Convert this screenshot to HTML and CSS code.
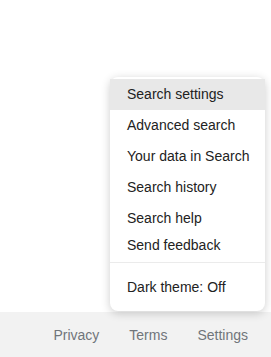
FILE: index.html
```html
<!DOCTYPE html>
<html>
<head>
<meta charset="utf-8">
<link rel="stylesheet" href="styles.css">
</head>
<body>
<div class="page">
  <div class="content"></div>
  <footer class="footer">
    <a class="flink">Privacy</a>
    <a class="flink">Terms</a>
    <a class="flink">Settings</a>
  </footer>
  <div class="menu">
    <div class="item active">Search settings</div>
    <div class="item">Advanced search</div>
    <div class="item">Your data in Search</div>
    <div class="item">Search history</div>
    <div class="item">Search help</div>
    <div class="item short">Send feedback</div>
    <div class="divider"></div>
    <div class="item last">Dark theme: Off</div>
  </div>
</div>
</body>
</html>
```

FILE: styles.css
```css
html, body {
  margin: 0;
  padding: 0;
  background: #fff;
  font-family: "Liberation Sans", Arial, sans-serif;
}
.page {
  position: relative;
  width: 271px;
  height: 357px;
  display: flex;
  flex-direction: column;
  overflow: hidden;
}
.content {
  flex: 1;
}
.footer {
  height: 45px;
  background: #f2f2f2;
  display: flex;
  justify-content: flex-end;
  align-items: center;
  gap: 30px;
  padding-right: 23px;
  font-size: 14px;
  color: #70757a;
}
.flink {
  color: #70757a;
  text-decoration: none;
}
.menu {
  position: absolute;
  left: 110px;
  top: 77px;
  width: 155px;
  background: #fff;
  border-radius: 8px;
  box-shadow: 0 2px 10px rgba(0, 0, 0, 0.2);
  padding: 2px 0 8px;
  font-size: 14px;
  color: #222;
}
.item {
  height: 31px;
  line-height: 31px;
  padding-left: 17px;
  white-space: nowrap;
}
.item.active {
  background: #e8e8e8;
}
.item.short {
  height: 22px;
  line-height: 22px;
}
.divider {
  margin-top: 6px;
  border-top: 1px solid #ebebeb;
}
.item.last {
  margin-top: 9px;
}
```
